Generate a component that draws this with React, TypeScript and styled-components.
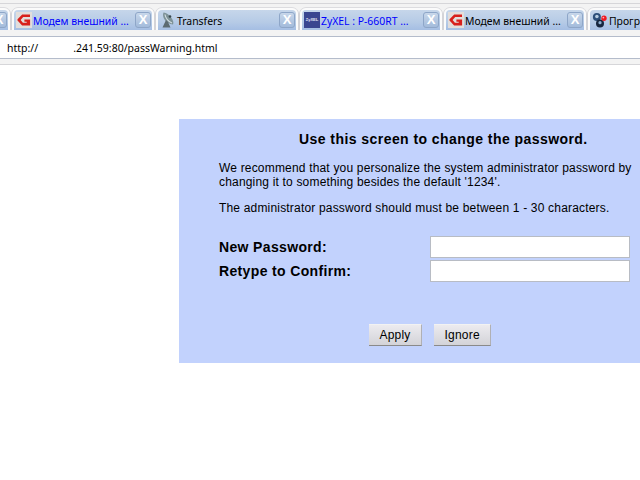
import styled, { createGlobalStyle } from "styled-components";

const GlobalStyle = createGlobalStyle`
  html, body {
    margin: 0;
    padding: 0;
    width: 640px;
    height: 480px;
    overflow: hidden;
    background: #fff;
  }
`;

interface ITab {
  title: string;
  icon: "g" | "dish" | "zyxel" | "prog";
  link?: boolean;
}

const tabs: ITab[] = [
  { title: "Модем внешний ...", icon: "g", link: true },
  { title: "Transfers", icon: "dish" },
  { title: "ZyXEL : P-660RT ...", icon: "zyxel", link: true },
  { title: "Модем внешний ...", icon: "g" },
];

const GIcon = () => (
  <IconBox $bg="#e2dedc">
    <svg width="16" height="16" viewBox="0 0 16 16">
      <path
        d="M14 2.5H6.2L1.5 7.2v1.2l4.6 5h8V7.4H8.4v2.3h2.3v1H6.9L4.6 8 7.2 5H14z"
        fill="#d8201c"
      />
    </svg>
  </IconBox>
);

const DishIcon = () => (
  <IconBox>
    <svg width="16" height="16" viewBox="0 0 16 16">
      <path d="M3.5 0.5C1.5 5 6 12 13 12.5 15 9 9 1 3.5 0.5z" fill="#7d9298" />
      <path d="M5 2.5C5.5 6 8.5 10 12 11" stroke="#d4dee2" strokeWidth="1.1" fill="none" />
      <path d="M6 8l-3.5 7.5h8L8 10z" fill="#5c6b72" />
      <circle cx="10" cy="4.5" r="1.3" fill="#38474d" />
    </svg>
  </IconBox>
);

const ZyxelIcon = () => <ZyxelBox>ZyXEL</ZyxelBox>;

const ProgIcon = () => (
  <IconBox>
    <svg width="18" height="18" viewBox="0 0 18 18">
      <circle cx="5.5" cy="5.5" r="4.5" fill="#2d4f7a" />
      <circle cx="5.5" cy="5" r="2" fill="#b7cde2" />
      <circle cx="9" cy="13" r="4.5" fill="#16263f" />
      <circle cx="9" cy="12" r="1.8" fill="#8fb0d0" />
      <circle cx="13.5" cy="7" r="3" fill="#f01820" />
      <circle cx="12.8" cy="6.3" r="1" fill="#ffb0b0" />
    </svg>
  </IconBox>
);

const TabIcon = ({ icon }: { icon: ITab["icon"] }) => {
  if (icon == "g") return <GIcon />;
  if (icon == "dish") return <DishIcon />;
  if (icon == "zyxel") return <ZyxelIcon />;
  return <ProgIcon />;
};

const App = () => {
  return (
    <Page>
      <GlobalStyle />
      <TopStrip />
      <TabBar>
        <StubTab>
          <CloseButton>X</CloseButton>
        </StubTab>
        {tabs.map((tab, i) => (
          <Tab key={i}>
            <TabIcon icon={tab.icon} />
            <TabTitle $link={tab.link}>{tab.title}</TabTitle>
            <CloseButton>X</CloseButton>
          </Tab>
        ))}
        <Tab>
          <TabIcon icon="prog" />
          <TabTitle>Прогр</TabTitle>
        </Tab>
      </TabBar>
      <AddressBar>
        http://<Host>.241.59:80/passWarning.html</Host>
      </AddressBar>
      <ToolbarFoot />
      <Panel>
        <Title>Use this screen to change the password.</Title>
        <Paragraph>
          We recommend that you personalize the system administrator password by
          <br />
          changing it to something besides the default '1234'.
        </Paragraph>
        <NoteParagraph>
          The administrator password should must be between 1 - 30 characters.
        </NoteParagraph>
        <FormRows>
          <FormRow>
            <FieldLabel>New Password:</FieldLabel>
            <FieldInput type="password" />
          </FormRow>
          <FormRow>
            <FieldLabel>Retype to Confirm:</FieldLabel>
            <FieldInput type="password" />
          </FormRow>
        </FormRows>
        <Buttons>
          <PanelButton>Apply</PanelButton>
          <PanelButton>Ignore</PanelButton>
        </Buttons>
      </Panel>
    </Page>
  );
};

export default App;

const Page = styled.div`
  width: 640px;
  height: 480px;
  overflow: hidden;
  background: #fff;
  display: flex;
  flex-direction: column;
`;

const TopStrip = styled.div`
  height: 4px;
  flex: none;
  box-sizing: border-box;
  background: #f3f3f3;
  border-bottom: 1px solid #d6d6d9;
`;

const TabBar = styled.div`
  height: 33px;
  flex: none;
  box-sizing: border-box;
  padding-top: 4px;
  background: #f3f3f3;
  border-bottom: 1px solid #b4bccb;
  display: flex;
  gap: 2px;
`;

const Tab = styled.div`
  width: 142px;
  height: 22px;
  flex: none;
  box-sizing: border-box;
  padding: 2px 1px 0 2px;
  border: 2px solid #fbfbfb;
  border-bottom: none;
  border-radius: 6px 6px 0 0;
  background: linear-gradient(#c6d6ea, #b6cbe6 60%, #a5bee3);
  box-shadow: 0 -1px 0 #dcdcdf, 1px 0 0 #d4d4d8, -1px 0 0 #d4d4d8;
  display: flex;
  align-items: flex-start;
  gap: 1px;
`;

const StubTab = styled(Tab)`
  width: 60px;
  margin-left: -50px;
  justify-content: flex-end;
`;

const IconBox = styled.span<{ $bg?: string }>`
  width: 16px;
  height: 16px;
  flex: none;
  display: flex;
  align-items: center;
  justify-content: center;
  background: ${(p) => p.$bg || "transparent"};
`;

const ZyxelBox = styled.span`
  width: 16px;
  height: 16px;
  flex: none;
  overflow: hidden;
  background: #3a4690;
  color: #e8e8f8;
  font: bold 4px/16px "Liberation Sans", sans-serif;
  text-align: center;
`;

const TabTitle = styled.span<{ $link?: boolean }>`
  flex: 1;
  min-width: 0;
  padding-top: 1px;
  white-space: nowrap;
  font: 10.4px/16px "Noto Sans", sans-serif;
  color: ${(p) => (p.$link ? "#0000ff" : "#000")};
`;

const CloseButton = styled.span`
  width: 16px;
  height: 16px;
  flex: none;
  box-sizing: border-box;
  border: 1px solid #8ea6c8;
  border-radius: 3px;
  background: linear-gradient(#c8d7ea, #a3bbdb);
  color: #fff;
  font: bold 13px/14px "Liberation Sans", sans-serif;
  text-align: center;
`;

const AddressBar = styled.div`
  height: 22px;
  flex: none;
  box-sizing: border-box;
  padding: 1px 0 0 7px;
  background: #fff;
  border-bottom: 1px solid #b4bccb;
  display: flex;
  align-items: center;
  font: 10.5px "Noto Sans", sans-serif;
  color: #000;
`;

const Host = styled.span`
  margin-left: 35px;
`;

const ToolbarFoot = styled.div`
  height: 6px;
  flex: none;
  box-sizing: border-box;
  background: #f3f3f3;
  border-bottom: 1px solid #d6d6d9;
`;

const Panel = styled.div`
  flex: none;
  width: 461px;
  height: 244px;
  margin: 54px 0 0 179px;
  box-sizing: border-box;
  padding: 12px 0 0 40px;
  background: #c2d2fd;
  font-family: "Liberation Sans", Arial, sans-serif;
  color: #000;
`;

const Title = styled.div`
  padding-left: 80px;
  font-size: 14px;
  font-weight: bold;
  line-height: 16px;
  letter-spacing: 0.44px;
`;

const Paragraph = styled.p`
  margin: 14px 0 0;
  font-size: 12px;
  line-height: 14px;
  letter-spacing: 0.18px;
  white-space: nowrap;
`;

const NoteParagraph = styled(Paragraph)`
  margin-top: 12px;
`;

const FormRows = styled.div`
  margin-top: 21px;
  display: flex;
  flex-direction: column;
  gap: 2px;
`;

const FormRow = styled.div`
  display: flex;
  align-items: center;
  height: 22px;
`;

const FieldLabel = styled.label`
  width: 211px;
  flex: none;
  font-size: 14px;
  font-weight: bold;
  letter-spacing: 0.35px;
`;

const FieldInput = styled.input`
  width: 200px;
  height: 22px;
  flex: none;
  box-sizing: border-box;
  margin: 0;
  padding: 0;
  background: #fff;
  border: 1px solid #b8bcc4;
`;

const Buttons = styled.div`
  margin: 42px 0 0 150px;
  display: flex;
  gap: 12px;
`;

const PanelButton = styled.button`
  height: 22px;
  padding: 0 10.5px;
  box-sizing: border-box;
  background: linear-gradient(#ecebef, #d3d3d8);
  border: none;
  border-top: 1px solid #f2f2f2;
  border-bottom: 1px solid #8a8a8a;
  border-right: 1px solid #b0b0b4;
  font: 12px "Liberation Sans", Arial, sans-serif;
  letter-spacing: 0.2px;
  color: #000;
`;
